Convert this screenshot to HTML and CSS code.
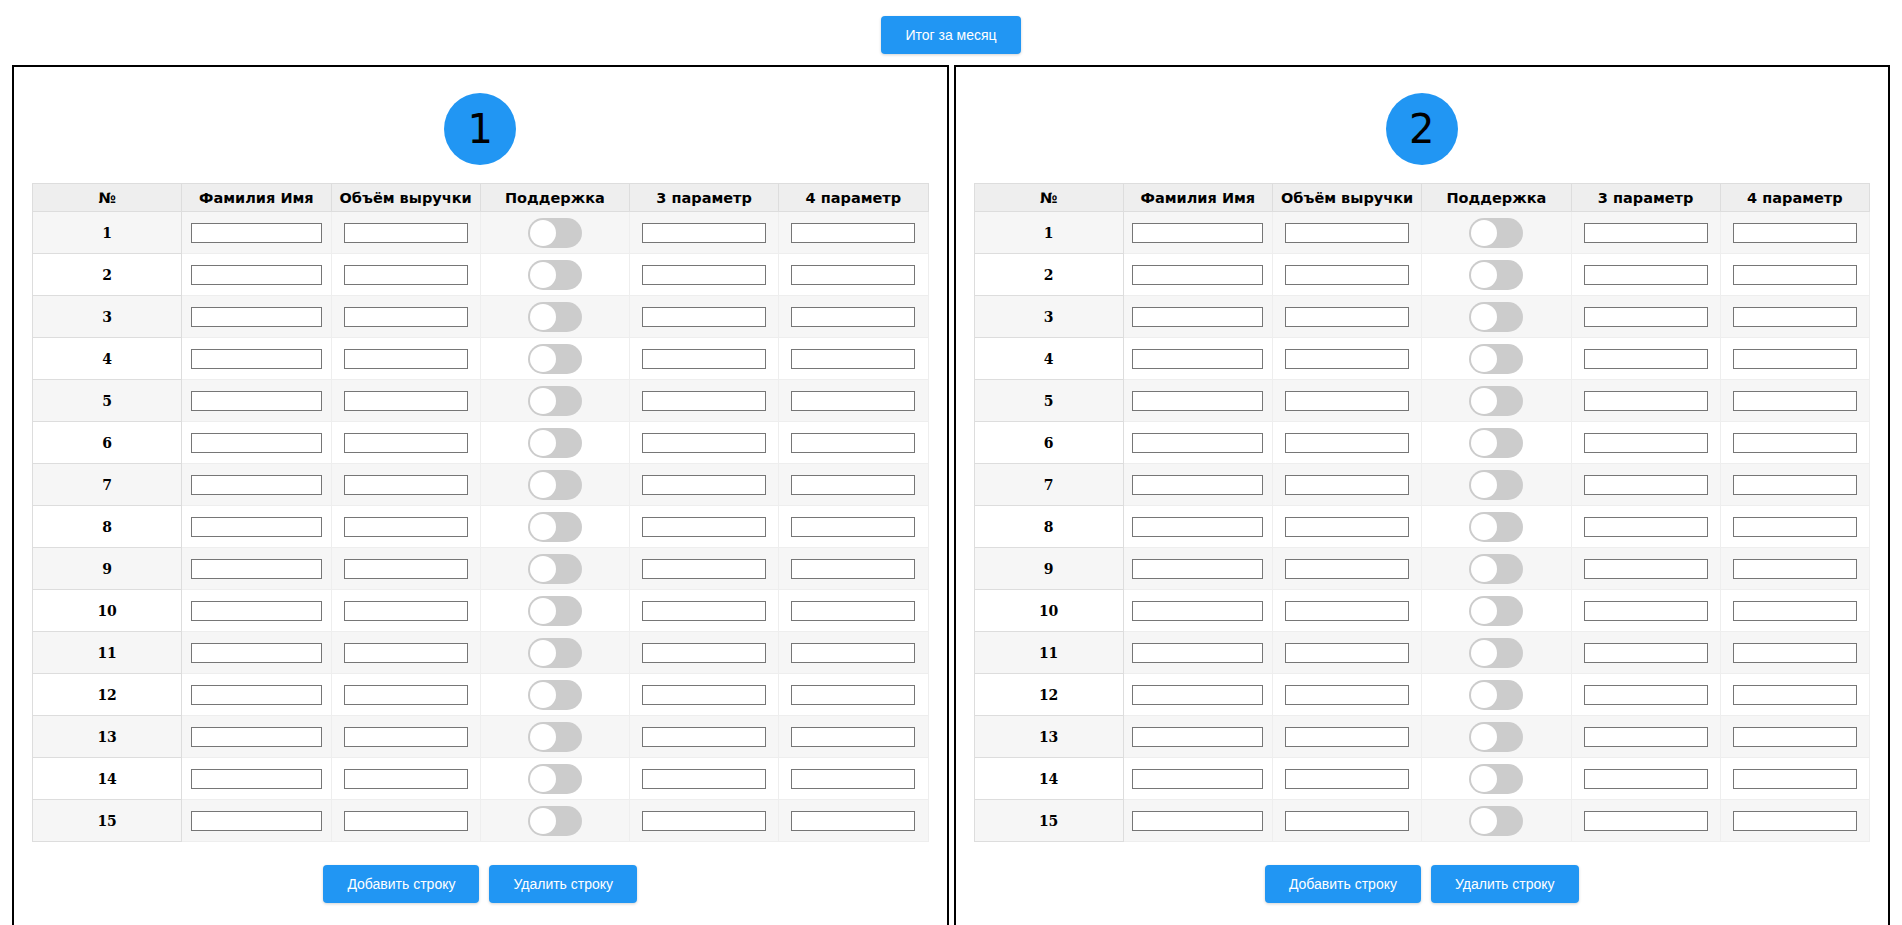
FILE: index.html
```html
<!DOCTYPE html>
<html lang="ru">
<head>
<meta charset="utf-8">
<title>Итог</title>
<link rel="stylesheet" href="styles.css">
</head>
<body>
<div class="top"><button class="btn">Итог за месяц</button></div>
<div class="panels">
  <section class="panel">
    <div class="badge">1</div>
    <table class="grid">
      <thead><tr><th>№</th><th>Фамилия Имя</th><th>Объём выручки</th><th>Поддержка</th><th>3 параметр</th><th>4 параметр</th></tr></thead>
      <tbody>
        <tr><td class="num">1</td><td><input class="wide" type="text"></td><td><input type="text"></td><td><label class="switch"><input type="checkbox"><span class="slider"></span></label></td><td><input type="text"></td><td><input type="text"></td></tr>
        <tr><td class="num">2</td><td><input class="wide" type="text"></td><td><input type="text"></td><td><label class="switch"><input type="checkbox"><span class="slider"></span></label></td><td><input type="text"></td><td><input type="text"></td></tr>
        <tr><td class="num">3</td><td><input class="wide" type="text"></td><td><input type="text"></td><td><label class="switch"><input type="checkbox"><span class="slider"></span></label></td><td><input type="text"></td><td><input type="text"></td></tr>
        <tr><td class="num">4</td><td><input class="wide" type="text"></td><td><input type="text"></td><td><label class="switch"><input type="checkbox"><span class="slider"></span></label></td><td><input type="text"></td><td><input type="text"></td></tr>
        <tr><td class="num">5</td><td><input class="wide" type="text"></td><td><input type="text"></td><td><label class="switch"><input type="checkbox"><span class="slider"></span></label></td><td><input type="text"></td><td><input type="text"></td></tr>
        <tr><td class="num">6</td><td><input class="wide" type="text"></td><td><input type="text"></td><td><label class="switch"><input type="checkbox"><span class="slider"></span></label></td><td><input type="text"></td><td><input type="text"></td></tr>
        <tr><td class="num">7</td><td><input class="wide" type="text"></td><td><input type="text"></td><td><label class="switch"><input type="checkbox"><span class="slider"></span></label></td><td><input type="text"></td><td><input type="text"></td></tr>
        <tr><td class="num">8</td><td><input class="wide" type="text"></td><td><input type="text"></td><td><label class="switch"><input type="checkbox"><span class="slider"></span></label></td><td><input type="text"></td><td><input type="text"></td></tr>
        <tr><td class="num">9</td><td><input class="wide" type="text"></td><td><input type="text"></td><td><label class="switch"><input type="checkbox"><span class="slider"></span></label></td><td><input type="text"></td><td><input type="text"></td></tr>
        <tr><td class="num">10</td><td><input class="wide" type="text"></td><td><input type="text"></td><td><label class="switch"><input type="checkbox"><span class="slider"></span></label></td><td><input type="text"></td><td><input type="text"></td></tr>
        <tr><td class="num">11</td><td><input class="wide" type="text"></td><td><input type="text"></td><td><label class="switch"><input type="checkbox"><span class="slider"></span></label></td><td><input type="text"></td><td><input type="text"></td></tr>
        <tr><td class="num">12</td><td><input class="wide" type="text"></td><td><input type="text"></td><td><label class="switch"><input type="checkbox"><span class="slider"></span></label></td><td><input type="text"></td><td><input type="text"></td></tr>
        <tr><td class="num">13</td><td><input class="wide" type="text"></td><td><input type="text"></td><td><label class="switch"><input type="checkbox"><span class="slider"></span></label></td><td><input type="text"></td><td><input type="text"></td></tr>
        <tr><td class="num">14</td><td><input class="wide" type="text"></td><td><input type="text"></td><td><label class="switch"><input type="checkbox"><span class="slider"></span></label></td><td><input type="text"></td><td><input type="text"></td></tr>
        <tr><td class="num">15</td><td><input class="wide" type="text"></td><td><input type="text"></td><td><label class="switch"><input type="checkbox"><span class="slider"></span></label></td><td><input type="text"></td><td><input type="text"></td></tr>
      </tbody>
    </table>
    <div class="actions"><button class="btn">Добавить строку</button><button class="btn">Удалить строку</button></div>
  </section>
  <section class="panel">
    <div class="badge">2</div>
    <table class="grid">
      <thead><tr><th>№</th><th>Фамилия Имя</th><th>Объём выручки</th><th>Поддержка</th><th>3 параметр</th><th>4 параметр</th></tr></thead>
      <tbody>
        <tr><td class="num">1</td><td><input class="wide" type="text"></td><td><input type="text"></td><td><label class="switch"><input type="checkbox"><span class="slider"></span></label></td><td><input type="text"></td><td><input type="text"></td></tr>
        <tr><td class="num">2</td><td><input class="wide" type="text"></td><td><input type="text"></td><td><label class="switch"><input type="checkbox"><span class="slider"></span></label></td><td><input type="text"></td><td><input type="text"></td></tr>
        <tr><td class="num">3</td><td><input class="wide" type="text"></td><td><input type="text"></td><td><label class="switch"><input type="checkbox"><span class="slider"></span></label></td><td><input type="text"></td><td><input type="text"></td></tr>
        <tr><td class="num">4</td><td><input class="wide" type="text"></td><td><input type="text"></td><td><label class="switch"><input type="checkbox"><span class="slider"></span></label></td><td><input type="text"></td><td><input type="text"></td></tr>
        <tr><td class="num">5</td><td><input class="wide" type="text"></td><td><input type="text"></td><td><label class="switch"><input type="checkbox"><span class="slider"></span></label></td><td><input type="text"></td><td><input type="text"></td></tr>
        <tr><td class="num">6</td><td><input class="wide" type="text"></td><td><input type="text"></td><td><label class="switch"><input type="checkbox"><span class="slider"></span></label></td><td><input type="text"></td><td><input type="text"></td></tr>
        <tr><td class="num">7</td><td><input class="wide" type="text"></td><td><input type="text"></td><td><label class="switch"><input type="checkbox"><span class="slider"></span></label></td><td><input type="text"></td><td><input type="text"></td></tr>
        <tr><td class="num">8</td><td><input class="wide" type="text"></td><td><input type="text"></td><td><label class="switch"><input type="checkbox"><span class="slider"></span></label></td><td><input type="text"></td><td><input type="text"></td></tr>
        <tr><td class="num">9</td><td><input class="wide" type="text"></td><td><input type="text"></td><td><label class="switch"><input type="checkbox"><span class="slider"></span></label></td><td><input type="text"></td><td><input type="text"></td></tr>
        <tr><td class="num">10</td><td><input class="wide" type="text"></td><td><input type="text"></td><td><label class="switch"><input type="checkbox"><span class="slider"></span></label></td><td><input type="text"></td><td><input type="text"></td></tr>
        <tr><td class="num">11</td><td><input class="wide" type="text"></td><td><input type="text"></td><td><label class="switch"><input type="checkbox"><span class="slider"></span></label></td><td><input type="text"></td><td><input type="text"></td></tr>
        <tr><td class="num">12</td><td><input class="wide" type="text"></td><td><input type="text"></td><td><label class="switch"><input type="checkbox"><span class="slider"></span></label></td><td><input type="text"></td><td><input type="text"></td></tr>
        <tr><td class="num">13</td><td><input class="wide" type="text"></td><td><input type="text"></td><td><label class="switch"><input type="checkbox"><span class="slider"></span></label></td><td><input type="text"></td><td><input type="text"></td></tr>
        <tr><td class="num">14</td><td><input class="wide" type="text"></td><td><input type="text"></td><td><label class="switch"><input type="checkbox"><span class="slider"></span></label></td><td><input type="text"></td><td><input type="text"></td></tr>
        <tr><td class="num">15</td><td><input class="wide" type="text"></td><td><input type="text"></td><td><label class="switch"><input type="checkbox"><span class="slider"></span></label></td><td><input type="text"></td><td><input type="text"></td></tr>
      </tbody>
    </table>
    <div class="actions"><button class="btn">Добавить строку</button><button class="btn">Удалить строку</button></div>
  </section>
</div>
</body>
</html>
```
FILE: styles.css
```css
html, body {
  margin: 0;
  padding: 0;
  background: #ffffff;
}
body {
  padding: 16px 12px 0 12px;
  font-family: "Liberation Serif", serif;
}
.top {
  display: flex;
  justify-content: center;
  margin-bottom: 11px;
}
.btn {
  background: #2196f3;
  color: #ffffff;
  border: none;
  border-radius: 4px;
  padding: 10px 24px;
  font-family: "Liberation Sans", Arial, sans-serif;
  font-size: 14px;
  line-height: 18px;
  box-shadow: 0 1px 3px rgba(0, 0, 0, 0.18);
  cursor: pointer;
}
.panels {
  display: flex;
  gap: 5px;
  align-items: flex-start;
}
.panel {
  flex: 1 1 0;
  border: 2px solid #000000;
  padding: 26px 18px 60px 18px;
}
.badge {
  width: 72px;
  height: 72px;
  margin: 0 auto 18px auto;
  border-radius: 50%;
  background: #2196f3;
  color: #000000;
  display: flex;
  align-items: center;
  justify-content: center;
  font-family: "DejaVu Sans", Verdana, sans-serif;
  font-size: 40px;
}
.grid {
  width: 100%;
  border-collapse: collapse;
  table-layout: fixed;
}
.grid th {
  background: #eeeeee;
  border: 1px solid #dddddd;
  height: 27px;
  padding: 0;
  font-family: "DejaVu Sans", Verdana, sans-serif;
  font-weight: bold;
  font-size: 14.5px;
  text-align: center;
}
.grid td {
  border: 1px solid #eeeeee;
  height: 41px;
  padding: 0;
  text-align: center;
  vertical-align: middle;
}
.grid tbody tr:nth-child(odd) td {
  background: #f6f6f6;
}
.grid tbody tr:nth-child(even) td {
  background: #ffffff;
}
.grid tbody td.num {
  background: #eeeeee;
  border: 1px solid #dddddd;
  font-family: "DejaVu Serif", "Liberation Serif", serif;
  font-weight: bold;
  font-size: 14px;
}
.grid input[type="text"] {
  box-sizing: border-box;
  width: 124px;
  height: 20px;
  border: 1px solid #767676;
  background: #ffffff;
  padding: 0 2px;
  vertical-align: middle;
}
.grid input.wide {
  width: 131px;
}
.switch {
  position: relative;
  display: inline-block;
  width: 54px;
  height: 30px;
  vertical-align: middle;
}
.switch input {
  opacity: 0;
  width: 0;
  height: 0;
  margin: 0;
}
.slider {
  position: absolute;
  inset: 0;
  background: #cccccc;
  border-radius: 15px;
  cursor: pointer;
}
.slider::before {
  content: "";
  position: absolute;
  left: 2px;
  top: 2px;
  width: 26px;
  height: 26px;
  border-radius: 50%;
  background: #ffffff;
}
.actions {
  display: flex;
  justify-content: center;
  gap: 10px;
  margin-top: 23px;
}
```
